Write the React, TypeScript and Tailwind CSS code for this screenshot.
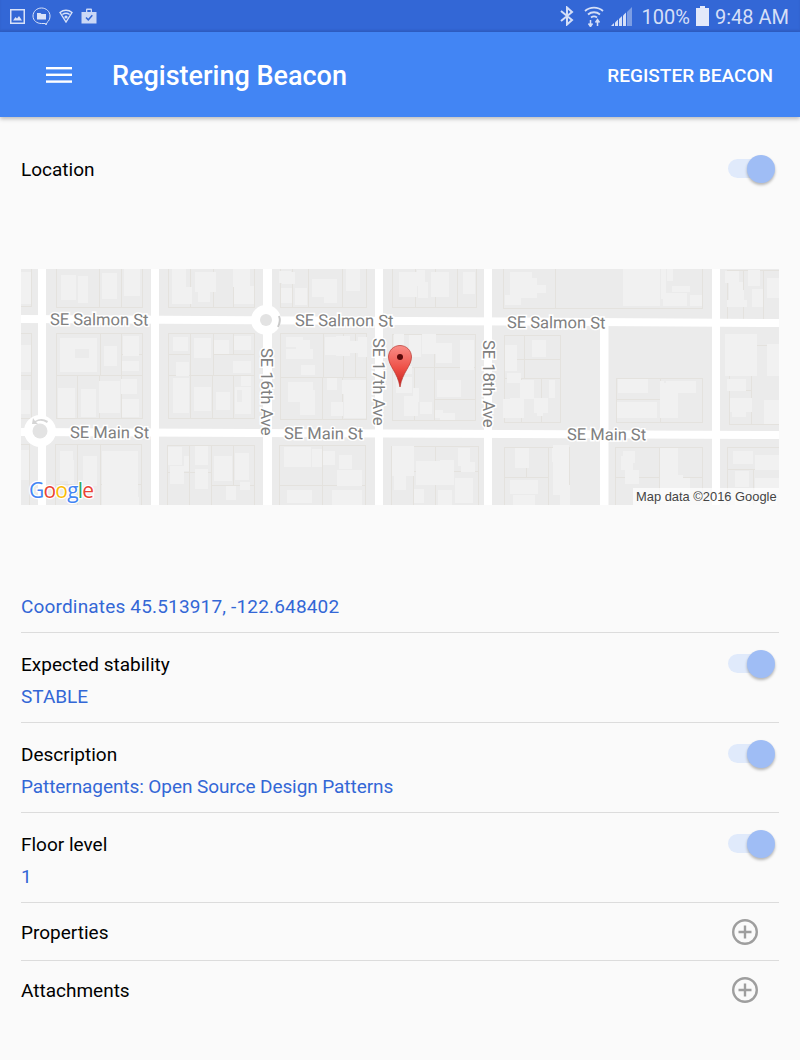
import React from "react";

type R = [number, number, number, number];

const lots: R[] = [
  [10,266,21,40],[10,333,21,42],[10,375,21,43],[10,444,19,70],
  [56,266,43,41],[99,266,22,41],[121,266,21,41],
  [56,333,44,42],[100,333,21,42],[121,333,21,21],[121,354,21,21],[56,375,21,43],[77,375,22,43],[99,375,22,43],[121,375,21,43],
  [55,444,22,40],[77,444,23,70],[100,444,41,40],[55,484,22,30],[100,484,41,30],
  [168,266,22,41],[190,266,23,41],[213,266,20,41],[233,266,21,41],
  [168,333,22,21],[168,354,22,21],[190,333,23,42],[213,333,20,21],[233,333,21,21],[213,354,41,21],[168,375,22,43],[190,375,22,43],[212,375,21,43],[233,375,21,43],
  [167,445,22,27],[167,472,22,40],[189,445,22,27],[189,472,22,40],[211,445,22,40],[233,445,21,40],[211,485,43,30],
  [280,266,12,41],[292,266,16,41],[308,266,34,41],[342,266,24,41],
  [280,333,43,44],[323,333,20,44],[343,333,12,44],[355,333,11,44],[280,377,42,42],[322,377,20,42],[342,377,24,42],
  [279,445,43,40],[322,445,43,40],[279,485,43,30],[322,485,43,30],
  [392,266,23,41],[415,266,20,41],[435,266,22,41],[457,266,19,41],
  [392,334,42,33],[434,334,41,33],[392,367,22,53],[414,367,20,53],[434,367,41,32],[434,399,41,21],
  [391,446,44,25],[435,446,43,25],[391,471,22,44],[413,471,22,44],[435,471,43,44],
  [503,266,52,42],[555,266,147,42],
  [504,335,20,24],[524,335,36,24],[524,359,36,19],[504,378,17,44],[521,378,20,44],[541,378,19,44],[504,359,20,19],
  [504,447,22,30],[526,447,22,30],[548,447,21,60],[504,477,44,30],
  [616,378,44,44],[660,378,42,44],[616,399,44,23],
  [615,447,44,30],[659,447,43,30],[615,477,44,30],[659,477,43,30],
  [727,270,16,50],[743,270,20,50],[763,270,16,50],
  [729,345,22,45],[751,345,28,79],[729,390,22,34],
  [727,447,52,22],[727,469,26,40],[753,469,26,40],
];

const buildings: R[] = [
  [21,272,10,32],[21,345,10,27],[21,390,9,24],[21,450,8,30],
  [61,275,15,25],[78,276,10,27],[102,273,15,26],[124,269,16,27],
  [60,338,37,34],[104,346,13,20],[123,336,16,20],[122,361,17,10],
  [58,388,17,30],[81,389,15,28],[99,381,21,32],[121,379,16,15],[122,399,17,18],
  [60,451,13,30],[68,460,6,24],[83,456,14,30],[102,451,36,33],[102,484,36,24],[121,497,18,13],
  [172,269,14,20],[195,272,21,20],[233,269,17,18],[172,287,20,17],[198,286,12,16],[234,286,20,18],
  [173,337,15,14],[194,338,17,20],[214,340,15,14],[234,336,17,14],[176,362,13,14],[233,361,18,12],
  [173,378,16,35],[194,387,17,24],[216,392,14,18],[235,387,16,27],[241,376,10,10],
  [168,447,14,18],[184,456,5,15],[195,446,13,19],[195,469,13,20],[214,456,18,25],[235,453,14,27],[170,466,14,18],[226,486,10,14],[240,482,10,8],
  [279,271,12,12],[282,272,13,12],[281,288,11,15],[295,288,12,17],[312,279,12,18],[324,279,13,24],[346,269,14,22],
  [286,337,17,10],[296,340,14,18],[286,349,27,10],[301,365,14,10],[325,337,12,18],[336,336,14,20],[347,341,11,12],[358,337,9,20],
  [288,382,16,20],[302,382,11,18],[302,404,8,10],[300,390,15,25],[327,378,10,12],[342,380,24,14],[344,393,22,25],[331,402,12,14],
  [284,447,27,20],[312,449,10,18],[323,451,12,14],[339,455,13,14],[337,470,25,16],[287,490,25,13],[332,490,30,20],
  [399,272,18,25],[417,270,8,16],[418,282,10,16],[431,272,18,25],[463,272,12,22],
  [394,334,10,14],[409,335,12,22],[422,334,14,20],[436,343,16,20],[460,340,14,30],
  [398,366,14,8],[396,377,16,16],[413,388,6,14],[437,380,24,17],[404,396,14,20],[420,402,12,12],[435,410,8,8],[440,413,15,7],
  [392,446,22,30],[394,470,12,20],[416,461,26,24],[440,460,14,25],[458,448,12,18],[461,462,14,10],[414,489,10,14],[438,490,14,20],[455,478,18,25],
  [510,272,22,26],[525,278,12,20],[536,285,10,8],[505,295,16,10],
  [505,345,12,26],[507,373,14,10],[520,380,14,19],[532,340,14,17],[549,380,6,18],
  [503,399,12,19],[534,398,14,15],[537,408,6,8],[510,398,14,20],
  [515,448,14,20],[552,448,12,14],[553,445,16,50],[510,480,28,14],[513,495,22,12],[560,485,10,20],
  [623,269,37,37],[661,269,5,30],[667,269,6,12],[672,286,18,6],[663,293,24,13],[690,295,12,11],
  [618,379,30,14],[660,381,36,12],[660,381,18,37],[617,402,40,16],
  [623,451,12,12],[621,456,12,14],[625,470,14,14],[660,448,18,30],[660,478,30,24],[665,475,18,30],
  [725,271,14,12],[729,282,14,24],[736,290,8,15],[748,270,12,16],[752,289,11,18],[767,278,12,20],[727,300,20,7],
  [725,334,32,31],[725,358,32,18],[727,379,19,12],[767,344,12,32],[730,398,22,14],[732,405,14,12],[764,400,15,24],
  [733,451,20,13],[755,455,24,15],[735,471,14,16],[755,478,24,14],[735,492,14,13],[757,495,20,12],
];

const darkBuildings: R[] = [[75,349,14,9],[237,390,5,12],[664,381,2,2]];

function MapArt() {
  const salmon = "21,315 779,319 779,327 21,323";
  const main = "21,428 779,431 779,439 21,436";
  const verticals = [38, 151, 263, 375, 484, 712];
  const labelClass = "fill-[#808080] stroke-white stroke-[3px] [paint-order:stroke]";
  const labelFont = { fontFamily: "Roboto, sans-serif", fontSize: 16.5 };
  return (
    <svg viewBox="21 269 758 236" className="block h-[236px] w-full">
      <defs>
        <linearGradient id="pin" x1="0" y1="0" x2="0" y2="1">
          <stop offset="0" stopColor="#f98d87" />
          <stop offset="0.55" stopColor="#ee5047" />
          <stop offset="1" stopColor="#c5221f" />
        </linearGradient>
      </defs>
      <rect x="21" y="269" width="758" height="236" fill="#ebebeb" />
      {lots.map((r, i) => (
        <rect key={i} x={r[0] + 0.5} y={r[1] + 0.5} width={r[2]} height={r[3]} fill="none" stroke="#e4e2de" />
      ))}
      {buildings.map((r, i) => (
        <rect key={i} x={r[0]} y={r[1]} width={r[2]} height={r[3]} fill="#f1f1f1" />
      ))}
      {darkBuildings.map((r, i) => (
        <rect key={i} x={r[0]} y={r[1]} width={r[2]} height={r[3]} fill="#ebebeb" />
      ))}
      <polygon points={salmon} fill="#fff" />
      <polygon points={main} fill="#fff" />
      {verticals.map((x) => (
        <rect key={x} x={x} y="269" width={x === 263 ? 9 : 8} height="236" fill="#fff" />
      ))}
      <rect x="600" y="322" width="8.5" height="183" fill="#fff" />
      <circle cx="266" cy="320" r="15" fill="#fff" />
      <circle cx="266" cy="320" r="6" fill="#e3e3e3" />
      <circle cx="40" cy="431" r="16" fill="#fff" />
      <circle cx="40" cy="431" r="7.5" fill="#e3e3e3" />
      <path d="M48 421 Q41 417 35 421 L33 418 L32 424 L38 424 L36 422 Q41 419 47 423" fill="#d5d5d5" />
      <path d="M279 316 Q281 321 278 327" fill="none" stroke="#c9c9c9" strokeWidth="2" />

      <g className={labelClass} style={labelFont}>
        <text x="50" y="325" transform="rotate(0.3 50 325)">SE Salmon St</text>
        <text x="295" y="326" transform="rotate(0.3 295 326)">SE Salmon St</text>
        <text x="507" y="328" transform="rotate(0.3 507 328)">SE Salmon St</text>
        <text x="70" y="438" transform="rotate(0.2 70 438)">SE Main St</text>
        <text x="284" y="439" transform="rotate(0.2 284 439)">SE Main St</text>
        <text x="567" y="440" transform="rotate(0.2 567 440)">SE Main St</text>
        <text x="261" y="348" transform="rotate(90 261 348)">SE 16th Ave</text>
        <text x="373" y="338" transform="rotate(90 373 338)">SE 17th Ave</text>
        <text x="483" y="340" transform="rotate(90 483 340)">SE 18th Ave</text>
      </g>

      <path d="M400 345.5 C393.5 345.5 388.5 350.5 388.5 357 C388.5 366 397.5 372 400 387 C402.5 372 411.5 366 411.5 357 C411.5 350.5 406.5 345.5 400 345.5 Z" fill="url(#pin)" stroke="#b8342c" strokeWidth="0.7" />
      <circle cx="400" cy="357" r="3" fill="#5a0a0a" />

      <text x="29" y="498" className="stroke-white stroke-[2.5px] [paint-order:stroke]" style={{ fontFamily: "'Open Sans', sans-serif", fontSize: 21, fontWeight: 500 }} letterSpacing="-0.8">
        <tspan fill="#4285f4">G</tspan>
        <tspan fill="#ea4335">o</tspan>
        <tspan fill="#fbbc05">o</tspan>
        <tspan fill="#4285f4">g</tspan>
        <tspan fill="#34a853">l</tspan>
        <tspan fill="#ea4335">e</tspan>
      </text>

      <rect x="633" y="488" width="146" height="17" fill="#fff" fillOpacity="0.7" />
      <text x="636" y="501" fill="#444" style={{ fontFamily: "'Liberation Sans', sans-serif", fontSize: 12.9 }}>
        Map data ©2016 Google
      </text>
    </svg>
  );
}

function Toggle() {
  return (
    <div className="relative h-[28px] w-[47px] shrink-0">
      <div className="absolute left-0 top-[4px] h-[19px] w-[44px] rounded-full bg-[#e0eafb]" />
      <div className="absolute right-0 top-0 h-[28px] w-[28px] rounded-full bg-[#9fbdf5] shadow-[0_2px_3px_rgba(0,0,0,0.28)]" />
    </div>
  );
}

function PlusIcon() {
  return (
    <svg viewBox="0 0 26 26" className="h-[26px] w-[26px] shrink-0" fill="none" stroke="#9e9e9e" strokeWidth="2.4">
      <circle cx="13" cy="13" r="11.8" />
      <path d="M13 6.5 V19.5 M6.5 13 H19.5" />
    </svg>
  );
}

function ValueRow({ label, value, valueClass }: { label: string; value: string; valueClass?: string }) {
  return (
    <div className="flex h-[90px] items-start justify-between border-b border-[#dcdcdc] pr-[4px] pt-[16px]">
      <div>
        <div className="h-[32px] leading-[32px] text-black">{label}</div>
        <div className={`h-[32px] leading-[32px] text-[#3367d6] ${valueClass ?? ""}`}>{value}</div>
      </div>
      <div className="mt-[1px]">
        <Toggle />
      </div>
    </div>
  );
}

function AddRow({ label, last }: { label: string; last?: boolean }) {
  return (
    <div className={`flex h-[58px] items-center justify-between pr-[21px] ${last ? "" : "border-b border-[#dcdcdc]"}`}>
      <span className={`text-black ${last ? "mt-[2px]" : "mt-[3px]"}`}>{label}</span>
      <PlusIcon />
    </div>
  );
}

function StatusLeft() {
  return (
    <div className="flex items-center">
      <svg viewBox="0 0 15 15" className="ml-[10px] h-[15px] w-[15px]" fill="#d9e2f8">
        <path d="M0 0 H15 V15 H0 Z M1.5 1.5 V13.5 H13.5 V1.5 Z" fillRule="evenodd" />
        <path d="M3 11.5 L5.5 8 L7 9.5 L9 7 L12 11.5 Z" />
      </svg>
      <svg viewBox="0 0 19 19" className="ml-[7px] h-[19px] w-[19px]" fill="none" stroke="#d9e2f8" strokeWidth="1">
        <path d="M9.5 1 C4.8 1 1 4.5 1 9 C1 13.5 4.8 16.5 9.5 16.5 L13.5 16.5 L14 18 L15 15.5 C17 14 18 11.8 18 9 C18 4.5 14.2 1 9.5 1 Z" />
        <path d="M5 6 H8.5 L9.5 7 H14 V12.5 H5 Z" fill="#d9e2f8" stroke="none" />
      </svg>
      <svg viewBox="0 0 14 14" className="ml-[8px] h-[14px] w-[14px]" fill="none" stroke="#d9e2f8" strokeWidth="1.4">
        <path d="M1 3.5 C4.5 0.5 9.5 0.5 13 3.5 L7 13 Z" />
        <path d="M3.3 5.5 C5.5 4 8.5 4 10.7 5.5" />
        <circle cx="7" cy="8" r="0.9" fill="#d9e2f8" />
      </svg>
      <svg viewBox="0 0 16 16" className="ml-[8px] h-[16px] w-[16px]">
        <path d="M0.5 4 H5 V1.5 Q5 0.5 6 0.5 H10 Q11 0.5 11 1.5 V4 H15.5 V15.5 H0.5 Z M6.3 4 H9.7 V2 H6.3 Z" fill="#cbd8f6" fillRule="evenodd" />
        <path d="M5 9.5 L7.3 11.8 L11.3 7.3" fill="none" stroke="#3367d6" strokeWidth="1.5" />
      </svg>
    </div>
  );
}

function StatusRight() {
  return (
    <div className="flex items-center text-[20px] text-[#d5dff7]">
      <svg viewBox="0 0 14 20" className="h-[20px] w-[14px]" fill="none" stroke="#d5dff7" strokeWidth="2">
        <path d="M1 5 L12 14 L7 18.5 V1.5 L12 6 L1 15" />
      </svg>
      <svg viewBox="0 0 20 22" className="ml-[10px] h-[22px] w-[20px]" fill="none" stroke="#d5dff7" strokeWidth="1.8">
        <path d="M1 6 C6 1.5 14 1.5 19 6" />
        <path d="M4 9.5 C7.5 6.5 12.5 6.5 16 9.5" />
        <path d="M7 12.5 C9 11 11 11 13 12.5" />
        <path d="M6.5 15 V21 M4.5 18.5 L6.5 21.5 L8.5 18.5 M13.5 21 V15 M11.5 17.5 L13.5 14.5 L15.5 17.5" strokeWidth="1.5" />
      </svg>
      <svg viewBox="0 0 21 20" className="ml-[7px] h-[20px] w-[21px]">
        <path d="M0 20 H3 V17 Z" fill="#d5dff7" />
        <path d="M4 20 H7 V13.5 L4 16.5 Z" fill="#d5dff7" />
        <path d="M8 20 H11 V10 L8 13 Z" fill="#d5dff7" />
        <path d="M12 20 H15 V6.5 L12 9.5 Z" fill="#d5dff7" />
        <path d="M16 20 H21 V1 L16 6 Z" fill="#d5dff7" fillOpacity="0.45" />
      </svg>
      <span className="ml-[10px] mt-[2px] leading-none">100%</span>
      <svg viewBox="0 0 13 20" className="ml-[6px] h-[20px] w-[13px]" fill="#e3e9fa">
        <path d="M4 0 H9 V2 H13 V20 H0 V2 H4 Z" />
      </svg>
      <span className="ml-[6px] mr-[11px] mt-[2px] leading-none">9:48 AM</span>
    </div>
  );
}

export default function App() {
  return (
    <div className="flex h-[1060px] w-[800px] flex-col overflow-hidden bg-[#fafafa] font-['Roboto',sans-serif] text-[19px]">
      <div className="flex h-[32px] shrink-0 items-center justify-between bg-[#3367d6] shadow-[inset_0_-2px_2px_rgba(0,0,0,0.08)]">
        <StatusLeft />
        <StatusRight />
      </div>
      <header className="z-10 flex h-[85px] shrink-0 items-center bg-[#4285f4] pr-[27px] text-white shadow-[0_2px_4px_rgba(0,0,0,0.25)]">
        <svg viewBox="0 0 26 16" className="ml-[46px] h-[16px] w-[26px]" fill="#fff">
          <rect y="0" width="26" height="2.4" />
          <rect y="6.6" width="26" height="2.4" />
          <rect y="13.4" width="26" height="2.4" />
        </svg>
        <h1 className="ml-[40px] mt-[4px] flex-1 text-[27px] font-medium leading-none">Registering Beacon</h1>
        <span className="mt-[3px] text-[19px] font-medium">REGISTER BEACON</span>
      </header>
      <main className="flex-1 px-[21px]">
        <div className="flex h-[104px] items-center justify-between pr-[4px]">
          <span className="mt-[2px] text-black">Location</span>
          <Toggle />
        </div>
        <div className="mt-[48px]">
          <MapArt />
        </div>
        <div className="mt-[86px] flex h-[42px] items-start border-b border-[#dcdcdc] leading-[32px] tracking-[0.17px] text-[#3367d6]">
          Coordinates 45.513917, -122.648402
        </div>
        <ValueRow label="Expected stability" value="STABLE" />
        <ValueRow label="Description" value="Patternagents: Open Source Design Patterns" valueClass="tracking-[-0.08px]" />
        <ValueRow label="Floor level" value="1" />
        <AddRow label="Properties" />
        <AddRow label="Attachments" last />
      </main>
    </div>
  );
}
